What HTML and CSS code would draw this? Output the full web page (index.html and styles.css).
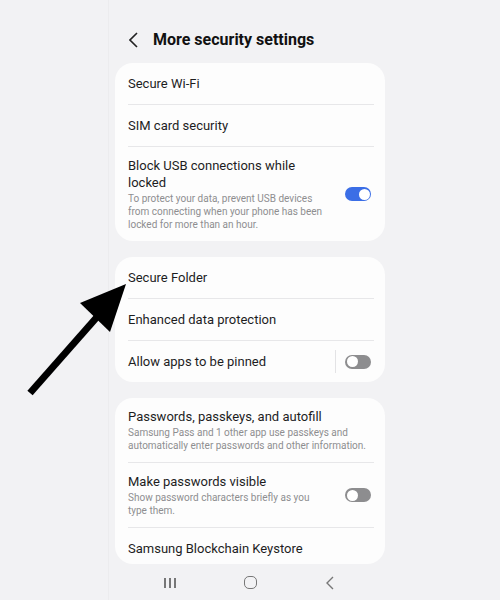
FILE: index.html
```html
<html>

<head>
  <meta name="viewport" content="width=device-width, initial-scale=1.0">
  <link rel="stylesheet" href="styles.css">
</head>

<body>
  <div class="screen">
    <div class="top">
      <svg class="back" width="9" height="16" viewBox="0 0 9 16">
        <polyline points="8,1 1,8 8,15" fill="none" stroke="#222" stroke-width="1.6" />
      </svg>
      <h1>More security settings</h1>
    </div>

    <div class="card">
      <div class="row"><span class="label">Secure Wi-Fi</span></div>
      <div class="row"><span class="label">SIM card security</span></div>
      <div class="row tall">
        <div class="text">
          <span class="label">Block USB connections while locked</span>
          <span class="desc">To protect your data, prevent USB devices from connecting when your phone has been locked for more than an hour.</span>
        </div>
        <i class="toggle on"></i>
      </div>
    </div>

    <div class="card">
      <div class="row"><span class="label">Secure Folder</span></div>
      <div class="row"><span class="label">Enhanced data protection</span></div>
      <div class="row">
        <span class="label">Allow apps to be pinned</span>
        <div class="switch">
          <b class="sep"></b>
          <i class="toggle"></i>
        </div>
      </div>
    </div>

    <div class="card last">
      <div class="row tall">
        <div class="text wide">
          <span class="label">Passwords, passkeys, and autofill</span>
          <span class="desc">Samsung Pass and 1 other app use passkeys and automatically enter passwords and other information.</span>
        </div>
      </div>
      <div class="row tall">
        <div class="text">
          <span class="label">Make passwords visible</span>
          <span class="desc">Show password characters briefly as you type them.</span>
        </div>
        <i class="toggle"></i>
      </div>
      <div class="row cut"><span class="label">Samsung Blockchain Keystore</span></div>
    </div>

    <div class="nav">
      <span class="recent"><b></b><b></b><b></b></span>
      <span class="home"></span>
      <svg width="8" height="14" viewBox="0 0 8 14">
        <polyline points="7,1 1,7 7,13" fill="none" stroke="#777" stroke-width="1.4" />
      </svg>
    </div>
  </div>

  <!-- pointer drawn over the page -->
  <svg class="arrow" width="140" height="130" viewBox="0 0 140 130">
    <line x1="30" y1="123" x2="97" y2="47" stroke="#000" stroke-width="7" />
    <polygon points="126,14 80,33 110,62" fill="#000" />
  </svg>
</body>

</html>
```

FILE: styles.css
```css
html,
body {
  margin: 0;
  padding: 0;
  background: #f2f2f4;
}

body * {
  box-sizing: border-box;
  margin: 0;
  padding: 0;
  font-family: Roboto, "Noto Sans", sans-serif;
  font-style: normal;
  font-weight: normal;
  color: #1d1d1f;
}

.screen {
  margin-left: 108px;
  width: 284px;
  height: 600px;
  padding: 0 7px 0 6px;
  border-left: 1px solid #ececee;
}

.top {
  display: flex;
  align-items: center;
  height: 63px;
  padding: 16px 0 0 14px;
}

.back {
  margin-right: 15px;
}

h1 {
  font-size: 16px;
  font-weight: bold;
  color: #111;
}

.card {
  background: #fdfdfd;
  border-radius: 18px;
  padding: 0 11px 0 13px;
  margin-bottom: 16px;
}

.card.last {
  margin-bottom: 0;
}

.row {
  display: flex;
  align-items: center;
  justify-content: space-between;
  padding: 12px 0;
}

.row+.row {
  border-top: 1px solid #e7e7e9;
}

.row.tall {
  padding: 10px 0;
}

.row.cut {
  padding: 12px 0 7px;
}

.text {
  display: flex;
  flex-direction: column;
  width: 200px;
}

.text.wide {
  width: 100%;
}

.label {
  display: block;
  font-size: 13px;
  line-height: 17px;
}

.desc {
  display: block;
  margin-top: 1px;
  font-size: 10px;
  line-height: 13px;
  color: #8e8e90;
}

.switch {
  display: flex;
  align-items: center;
  height: 17px;
}

.sep {
  width: 1px;
  height: 23px;
  background: #e3e3e5;
  margin-right: 9px;
}

.toggle {
  position: relative;
  display: block;
  width: 26px;
  height: 14px;
  border-radius: 7px;
  background: #8d8d8f;
  margin-right: 3px;
}

.toggle::after {
  content: "";
  position: absolute;
  top: 1.5px;
  left: 1.5px;
  width: 11px;
  height: 11px;
  border-radius: 50%;
  background: #fff;
}

.toggle.on {
  background: #3b6ee6;
}

.toggle.on::after {
  left: auto;
  right: 1.5px;
}

.nav {
  display: grid;
  grid-template-columns: 80px 80px 80px;
  justify-items: center;
  align-items: center;
  height: 37px;
  padding: 0 15px;
}

.recent {
  display: flex;
  gap: 3.5px;
}

.recent b {
  width: 1.5px;
  height: 10px;
  background: #777;
}

.home {
  width: 13px;
  height: 13px;
  border: 1.5px solid #777;
  border-radius: 5px;
}

.arrow {
  position: absolute;
  left: 0;
  top: 270px;
}
```
